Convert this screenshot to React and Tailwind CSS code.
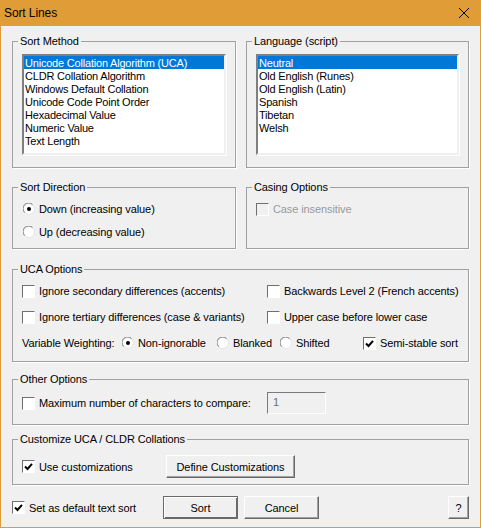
import React from "react";

const sortMethods = [
  "Unicode Collation Algorithm (UCA)",
  "CLDR Collation Algorithm",
  "Windows Default Collation",
  "Unicode Code Point Order",
  "Hexadecimal Value",
  "Numeric Value",
  "Text Length",
];

const languages = ["Neutral", "Old English (Runes)", "Old English (Latin)", "Spanish", "Tibetan", "Welsh"];

function Group({ title, className, children }) {
  return (
    <fieldset className={`m-0 p-0 border border-[#a0a0a0] shadow-[1px_1px_0_#fff] min-w-0 ${className}`}>
      <legend className="ml-[5px] px-[2px] text-[11px] leading-[14px] text-black">{title}</legend>
      {children}
    </fieldset>
  );
}

function ListBox({ items }) {
  return (
    <div className="mx-[9px] mt-[6px] h-[101px] border-2 border-t-[#7f7f7f] border-l-[#7f7f7f] border-r-[#f0f0f0] border-b-[#f0f0f0] bg-white shadow-[1px_1px_0_#fff]">
      {items.map((item, i) => (
        <div
          key={item}
          className={`h-[13px] pl-[1px] text-[11px] leading-[15px] tracking-[-0.2px] whitespace-nowrap ${i === 0 ? "bg-[#0078d7] text-white" : "text-black"}`}
        >
          {item}
        </div>
      ))}
    </div>
  );
}

function Checkbox({ checked, disabled, label, className = "" }) {
  return (
    <div className={`flex items-center h-[14px] shrink-0 ${className}`}>
      <div
        className={`relative w-[13px] h-[13px] shrink-0 border border-t-[#6f6f6f] border-l-[#6f6f6f] border-r-white border-b-white ${disabled ? "bg-[#f0f0f0]" : "bg-white"}`}
      >
        {checked && (
          <svg viewBox="0 0 11 11" className="absolute inset-0 w-[11px] h-[11px]">
            <path d="M2 5.5 L4.5 8 L9 2.8" fill="none" stroke="#000" strokeWidth="2" />
          </svg>
        )}
      </div>
      <span className={`ml-[4px] text-[11px] leading-[14px] whitespace-nowrap ${disabled ? "text-[#9a9a9a]" : "text-black"}`}>{label}</span>
    </div>
  );
}

function Radio({ checked, label, className = "" }) {
  return (
    <div className={`flex items-center h-[14px] shrink-0 ${className}`}>
      <svg viewBox="0 0 12 12" className="w-[12px] h-[12px] shrink-0">
        <circle cx="6" cy="6" r="5.5" fill="#fff" stroke="#e4e4e4" />
        <path d="M1.6 9.5 A5.5 5.5 0 0 1 9.5 1.6" fill="none" stroke="#777" />
        {checked && <circle cx="6" cy="6" r="2" fill="#000" />}
      </svg>
      <span className="ml-[4px] text-[11px] leading-[14px] whitespace-nowrap text-black">{label}</span>
    </div>
  );
}

function Button({ children, className = "" }) {
  return (
    <button className={`h-[23px] border border-t-white border-l-white border-r-[#696969] border-b-[#696969] shadow-[inset_-1px_-1px_0_#a0a0a0] bg-[#f0f0f0] text-[11px] leading-[14px] text-black ${className}`}>
      {children}
    </button>
  );
}

export default function App() {
  return (
    <div className="w-[481px] h-[528px] flex flex-col bg-[#f0f0f0] border border-t-0 border-[#e09d37] font-['Liberation_Sans',sans-serif] tracking-[-0.1px]">
      <div className="h-[26px] shrink-0 -mx-[1px] bg-[#e09d37] flex items-center justify-between pl-[4px] pr-[12px]">
        <span className="text-[12px] text-black">Sort Lines</span>
        <svg viewBox="0 0 10 10" className="w-[10px] h-[10px]">
          <path d="M0 0 L10 10 M10 0 L0 10" stroke="#000" strokeWidth="1" fill="none" />
        </svg>
      </div>

      <div className="flex flex-col pl-[11px] pr-[11px] pt-[8px]">
        <div className="flex gap-[10px] h-[134px]">
          <Group title="Sort Method" className="w-[224px] h-[134px]">
            <ListBox items={sortMethods} />
          </Group>
          <Group title="Language (script)" className="w-[223px] h-[134px]">
            <ListBox items={languages} />
          </Group>
        </div>

        <div className="flex gap-[10px] mt-[12px] h-[69px]">
          <Group title="Sort Direction" className="w-[224px] h-[69px]">
            <Radio checked label="Down (increasing value)" className="ml-[10px] mt-[8px]" />
            <Radio label="Up (decreasing value)" className="ml-[10px] mt-[9px]" />
          </Group>
          <Group title="Casing Options" className="w-[223px] h-[69px]">
            <Checkbox disabled label="Case insensitive" className="ml-[9px] mt-[8px]" />
          </Group>
        </div>

        <Group title="UCA Options" className="w-[457px] h-[100px] mt-[13px]">
          <div className="flex mt-[8px] ml-[9px]">
            <Checkbox label="Ignore secondary differences (accents)" className="w-[245px]" />
            <Checkbox label="Backwards Level 2 (French accents)" />
          </div>
          <div className="flex mt-[12px] ml-[9px]">
            <Checkbox label="Ignore tertiary differences (case &amp; variants)" className="w-[245px]" />
            <Checkbox label="Upper case before lower case" />
          </div>
          <div className="flex items-center mt-[12px] ml-[9px]">
            <span className="w-[100px] shrink-0 text-[11px] leading-[14px] whitespace-nowrap">Variable Weighting:</span>
            <Radio checked label="Non-ignorable" className="w-[95px]" />
            <Radio label="Blanked" className="w-[63px]" />
            <Radio label="Shifted" className="w-[83px]" />
            <Checkbox checked label="Semi-stable sort" />
          </div>
        </Group>

        <Group title="Other Options" className="w-[457px] h-[53px] mt-[10px]">
          <div className="flex items-center ml-[9px] mt-[6px]">
            <Checkbox label="Maximum number of characters to compare:" className="w-[245px]" />
            <div className="w-[59px] h-[22px] pl-[5px] border border-t-[#7a7a7a] border-l-[#7a7a7a] border-r-white border-b-white text-[11px] leading-[18px] text-[#6d6d6d]">
              1
            </div>
          </div>
        </Group>

        <Group title="Customize UCA / CLDR Collations" className="w-[457px] h-[53px] mt-[7px]">
          <div className="flex items-center ml-[9px] mt-[9px]">
            <Checkbox checked label="Use customizations" className="w-[144px]" />
            <Button className="w-[129px]">Define Customizations</Button>
          </div>
        </Group>

        <div className="flex items-center mt-[11px]">
          <Checkbox checked label="Set as default text sort" className="w-[151px]" />
          <Button className="w-[75px] !border-[#696969] !shadow-[inset_1px_1px_0_#fff,inset_-1px_-1px_0_#696969]">Sort</Button>
          <Button className="w-[75px] ml-[6px]">Cancel</Button>
          <Button className="w-[21px] ml-[129px]">?</Button>
        </div>
      </div>
    </div>
  );
}
